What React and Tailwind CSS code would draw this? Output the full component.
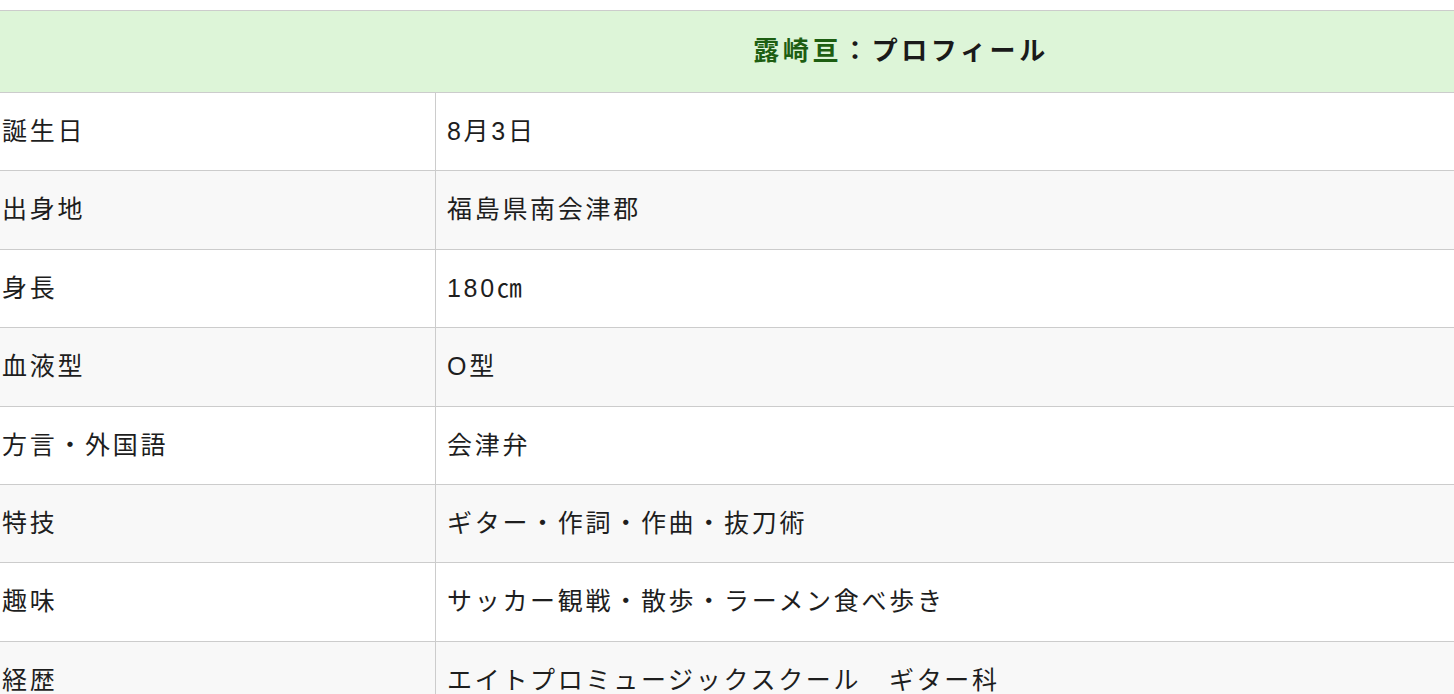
import React from "react";

const rows = [
  ["誕生日", "8月3日"],
  ["出身地", "福島県南会津郡"],
  ["身長", "180㎝"],
  ["血液型", "O型"],
  ["方言・外国語", "会津弁"],
  ["特技", "ギター・作詞・作曲・抜刀術"],
  ["趣味", "サッカー観戦・散歩・ラーメン食べ歩き"],
  ["経歴", "エイトプロミュージックスクール　ギター科"],
];

export default function App() {
  return (
    <div
      className="w-[1454px] h-[694px] overflow-hidden bg-white text-[#1e1e1e]"
      style={{ fontFamily: '"Liberation Sans", "Noto Sans CJK JP", sans-serif' }}
    >
      <div className="pt-[10px]">
        <div className="border-t border-b border-[#cccccc] bg-[#ddf5d8] h-[83px] flex items-center justify-center pl-[348px]">
          <span className="text-[26px] font-bold tracking-[3.6px]">
            <span className="text-[#1d5e12]">露崎亘</span>
            <span className="text-[#1a1a1a]">：プロフィール</span>
          </span>
        </div>
        {rows.map(([k, v], i) => (
          <div
            key={k}
            className={`flex h-[78.4px] border-b border-[#cccccc] ${i % 2 === 1 ? "bg-[#f8f8f8]" : "bg-white"}`}
          >
            <div className="w-[436px] shrink-0 border-r border-[#cccccc] flex items-center pl-[2px] text-[25px] tracking-[2.7px]">
              {k}
            </div>
            <div className="flex-1 flex items-center pl-[11px] text-[25px] tracking-[2.7px]">
              {v}
            </div>
          </div>
        ))}
      </div>
    </div>
  );
}
